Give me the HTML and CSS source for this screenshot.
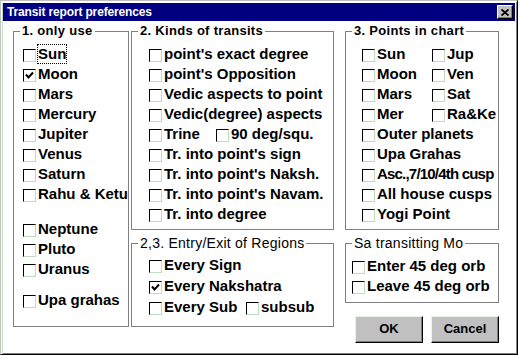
FILE: index.html
```html
<!DOCTYPE html>
<html lang="en">
<head>
    <meta charset="UTF-8">
    <title>Transit report preferences</title>
    <link rel="stylesheet" href="styles.css">
</head>
<body>
    <div class="window">
        <div class="titlebar">
            <span class="title">Transit report preferences</span>
            <span class="close">
                <svg width="8" height="7" viewBox="0 0 8 7"><path d="M0.5 0.5 L7.5 6.5 M7.5 0.5 L0.5 6.5" stroke="#000" stroke-width="1.8"/></svg>
            </span>
        </div>

        <div class="panes">
            <fieldset class="group g-use">
                <legend>1. only use</legend>
                <div class="items">
                    <label class="check"><span class="box"></span><span class="text focus">Sun</span></label>
                    <label class="check"><span class="box on"><svg width="11" height="11"><path d="M2 4.5 L4.5 7.5 L9 2.5" fill="none" stroke="#000" stroke-width="2"/></svg></span><span class="text">Moon</span></label>
                    <label class="check"><span class="box"></span><span class="text">Mars</span></label>
                    <label class="check"><span class="box"></span><span class="text">Mercury</span></label>
                    <label class="check"><span class="box"></span><span class="text">Jupiter</span></label>
                    <label class="check"><span class="box"></span><span class="text">Venus</span></label>
                    <label class="check"><span class="box"></span><span class="text">Saturn</span></label>
                    <label class="check"><span class="box"></span><span class="text">Rahu &amp; Ketu</span></label>
                    <label class="check outer"><span class="box"></span><span class="text">Neptune</span></label>
                    <label class="check"><span class="box"></span><span class="text">Pluto</span></label>
                    <label class="check"><span class="box"></span><span class="text">Uranus</span></label>
                    <label class="check upa"><span class="box"></span><span class="text">Upa grahas</span></label>
                </div>
            </fieldset>

            <div class="col col-mid">
                <fieldset class="group g-kinds">
                    <legend>2. Kinds of transits</legend>
                    <div class="items">
                        <label class="check"><span class="box"></span><span class="text">point's exact degree</span></label>
                        <label class="check"><span class="box"></span><span class="text">point's Opposition</span></label>
                        <label class="check"><span class="box"></span><span class="text">Vedic aspects to point</span></label>
                        <label class="check"><span class="box"></span><span class="text">Vedic(degree) aspects</span></label>
                        <div class="pair trine">
                            <label class="check"><span class="box"></span><span class="text">Trine</span></label>
                            <label class="check"><span class="box"></span><span class="text">90 deg/squ.</span></label>
                        </div>
                        <label class="check"><span class="box"></span><span class="text">Tr. into point's sign</span></label>
                        <label class="check"><span class="box"></span><span class="text">Tr. into point's Naksh.</span></label>
                        <label class="check"><span class="box"></span><span class="text">Tr. into point's Navam.</span></label>
                        <label class="check"><span class="box"></span><span class="text">Tr. into degree</span></label>
                    </div>
                </fieldset>

                <fieldset class="group g-regions light">
                    <legend>2,3. Entry/Exit of Regions</legend>
                    <div class="items">
                        <label class="check"><span class="box"></span><span class="text">Every Sign</span></label>
                        <label class="check"><span class="box on"><svg width="11" height="11"><path d="M2 4.5 L4.5 7.5 L9 2.5" fill="none" stroke="#000" stroke-width="2"/></svg></span><span class="text">Every Nakshatra</span></label>
                        <div class="pair sub">
                            <label class="check"><span class="box"></span><span class="text">Every Sub</span></label>
                            <label class="check"><span class="box"></span><span class="text">subsub</span></label>
                        </div>
                    </div>
                </fieldset>
            </div>

            <div class="col col-right">
                <fieldset class="group g-points">
                    <legend>3. Points in chart</legend>
                    <div class="items">
                        <div class="pair planets">
                            <label class="check"><span class="box"></span><span class="text">Sun</span></label>
                            <label class="check"><span class="box"></span><span class="text">Jup</span></label>
                            <label class="check"><span class="box"></span><span class="text">Moon</span></label>
                            <label class="check"><span class="box"></span><span class="text">Ven</span></label>
                            <label class="check"><span class="box"></span><span class="text">Mars</span></label>
                            <label class="check"><span class="box"></span><span class="text">Sat</span></label>
                            <label class="check"><span class="box"></span><span class="text">Mer</span></label>
                            <label class="check"><span class="box"></span><span class="text">Ra&amp;Ke</span></label>
                        </div>
                        <label class="check"><span class="box"></span><span class="text">Outer planets</span></label>
                        <label class="check"><span class="box"></span><span class="text">Upa Grahas</span></label>
                        <label class="check"><span class="box"></span><span class="text tight">Asc.,7/10/4th cusp</span></label>
                        <label class="check"><span class="box"></span><span class="text">All house cusps</span></label>
                        <label class="check"><span class="box"></span><span class="text">Yogi Point</span></label>
                    </div>
                </fieldset>

                <fieldset class="group g-sa light">
                    <legend>Sa transitting Mo</legend>
                    <div class="items">
                        <label class="check"><span class="box"></span><span class="text">Enter 45 deg orb</span></label>
                        <label class="check"><span class="box"></span><span class="text">Leave 45 deg orb</span></label>
                    </div>
                </fieldset>

                <div class="buttons">
                    <button>OK</button>
                    <button>Cancel</button>
                </div>
            </div>
        </div>
    </div>
</body>
</html>
```

FILE: styles.css
```css
* {
    box-sizing: border-box;
}
body {
    margin: 0;
    background-color: #fff;
    font-family: "Liberation Sans", Arial, sans-serif;
    color: #000;
}
.window {
    width: 518px;
    height: 355px;
    padding: 2px;
    background-color: #fff;
    border: 1px solid;
    border-color: #c0c0c0 #000 #000 #c0c0c0;
    box-shadow: inset 1px 1px #fff, inset 2px 0 #c0dcc0, inset -1px -1px #808080;
}
.titlebar {
    height: 18px;
    background-color: #000080;
    color: #fff;
    display: flex;
    align-items: center;
    justify-content: space-between;
    padding: 0 2px 0 4px;
}
.title {
    font-size: 12px;
    font-weight: bold;
    letter-spacing: -0.15px;
}
.close {
    width: 16px;
    height: 14px;
    background-color: #c0c0c0;
    border: 1px solid;
    border-color: #fff #000 #000 #fff;
    box-shadow: inset -1px -1px #808080;
    display: flex;
    align-items: center;
    justify-content: center;
}
.panes {
    display: flex;
    align-items: flex-start;
    padding: 2px 0 0 10px;
}
.col {
    display: flex;
    flex-direction: column;
}
.col-mid {
    width: 203px;
    margin-left: 2px;
    gap: 5px;
}
.col-right {
    width: 154px;
    margin-left: 11px;
    gap: 5px;
}
.group {
    margin: 0;
    padding: 0 0 0 6px;
    border: 1px solid #808080;
    min-width: 0;
    overflow: hidden;
}
.group legend {
    padding: 0 2px;
    font-size: 13px;
    line-height: 16px;
    font-weight: bold;
    letter-spacing: 0.3px;
}
.group.light legend {
    font-size: 14px;
    font-weight: normal;
    letter-spacing: 0.25px;
}
.g-use {
    width: 116px;
    height: 304px;
}
.g-use .items {
    padding: 6px 0 0 3px;
}
.g-kinds,
.g-points {
    height: 207px;
}
.g-kinds .items {
    padding: 6px 0 0 11px;
}
.g-points .items {
    padding: 6px 0 0 10px;
}
.g-regions {
    height: 92px;
}
.g-regions .items {
    padding: 5px 0 0 11px;
}
.g-regions .check {
    height: 21px;
}
.g-sa {
    height: 68px;
}
.g-sa .items {
    padding: 6px 0 0 0;
}
.check {
    display: flex;
    align-items: flex-start;
    height: 20px;
    font-size: 15px;
    font-weight: bold;
    white-space: nowrap;
}
.check .text {
    line-height: 18px;
}
.check .tight {
    letter-spacing: -0.8px;
}
.box {
    flex: none;
    width: 13px;
    height: 13px;
    margin: 4px 2px 0 0;
    background-color: #fff;
    border: 1px solid;
    border-color: #000 #c0dcc0 #c0dcc0 #000;
}
.box svg {
    display: block;
}
.focus {
    outline: 1px dotted #000;
}
.check.outer {
    margin-top: 15px;
}
.check.upa {
    margin-top: 11px;
}
.pair {
    display: grid;
}
.trine {
    grid-template-columns: 67px auto;
}
.sub {
    grid-template-columns: 97px auto;
}
.planets {
    grid-template-columns: 70px auto;
}
.buttons {
    display: flex;
    justify-content: flex-end;
    gap: 8px;
    margin-top: 8px;
}
.buttons button {
    width: 68px;
    height: 27px;
    padding: 0 0 2px;
    background-color: #c0c0c0;
    border: 1px solid;
    border-color: #e8f4e8 #000 #000 #e8f4e8;
    box-shadow: inset -1px -1px #808080;
    font-family: "Liberation Sans", Arial, sans-serif;
    font-size: 13px;
    font-weight: bold;
    color: #000;
}
```
